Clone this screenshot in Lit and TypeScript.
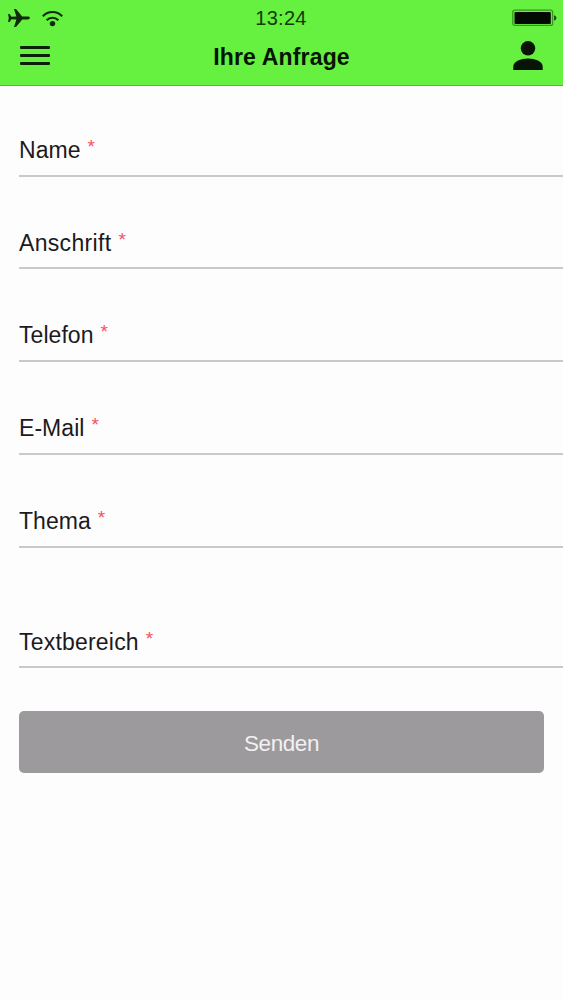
import { LitElement, html, css } from "lit";
import { customElement } from "lit/decorators.js";

const FIELDS = [
  { label: "Name", size: "first" },
  { label: "Anschrift", size: "second" },
  { label: "Telefon", size: "" },
  { label: "E-Mail", size: "" },
  { label: "Thema", size: "" },
  { label: "Textbereich", size: "area" },
];

@customElement("app-root")
export class AppRoot extends LitElement {
  static styles = css`
    :host {
      display: flex;
      flex-direction: column;
      height: 1000px;
      overflow: hidden;
      background: #fefdfe;
      color: #1c1a1c;
      font-family: "Liberation Sans", Arial, sans-serif;
    }
    * { box-sizing: border-box; }
    svg { display: block; }
    header {
      flex: none;
      height: 86px;
      background: #66f03f;
      border-bottom: 1px solid #58b63c;
      color: #071504;
    }
    .status, .nav {
      display: grid;
      grid-template-columns: 1fr auto 1fr;
    }
    .status { height: 36px; padding: 0 6px 0 7px; align-items: center; }
    .signals { display: flex; gap: 12px; align-items: center; }
    .time { font-size: 20px; line-height: 22px; letter-spacing: 0.3px; color: #123a0c; padding-bottom: 1px; margin-right: 2px; }
    .battery { justify-self: end; }
    .nav { height: 49px; padding: 0 20px; }
    .menu { display: flex; flex-direction: column; gap: 5px; padding-top: 10px; width: 30px; }
    .bar { height: 3px; border-radius: 1px; background: #092007; }
    h1 { margin: 0; padding-top: 7px; font-size: 23px; line-height: 28px; font-weight: 700; letter-spacing: 0.17px; }
    .user { justify-self: end; padding-top: 5px; }
    .field {
      margin-left: 19px;
      height: 93px;
      border-bottom: 2px solid #cac8ca;
      display: flex;
      align-items: flex-end;
      gap: 7px;
      padding-bottom: 12px;
      font-size: 23px;
      line-height: 26px;
      letter-spacing: 0.05px;
    }
    .first { height: 91px; }
    .second { height: 92px; padding-bottom: 11px; letter-spacing: 0.33px; }
    .area { height: 120px; padding-bottom: 11px; letter-spacing: 0.2px; }
    .star { color: #f4515b; font-size: 19px; padding-bottom: 3px; }
    .send {
      display: block;
      width: calc(100% - 38px);
      height: 62px;
      margin: 43px 19px 0;
      padding: 3px 0 0;
      border: 0;
      border-radius: 5px;
      background: #9d9a9d;
      color: #f2f0f2;
      font: 22.5px/26px "Liberation Sans", Arial, sans-serif;
      letter-spacing: -0.4px;
    }
  `;

  render() {
    return html`
      <header>
        <div class="status">
          <div class="signals">
            <svg width="23" height="20" viewBox="0 0 23 20" fill="#0d2b09">
              <path d="M22.800 10c0 1-.9 1.400-2 1.400h-5.600L9 19H7l2.400-7.600-5-.1L2.600 14H1.100l.7-4-.7-4h1.500l1.800 2.700 5-.1L7 1h2l6.200 7.600h5.600c1.100 0 2 .4 2 1.400z"/>
            </svg>
            <svg width="21" height="17" viewBox="0 0 21 17" fill="none" stroke="#0d2b09" stroke-width="2">
              <path d="M.8 6.200C6.300.6 14.700.6 20.200 6.200M4.600 10.200c3.400-3.300 8.400-3.300 11.800 0"/>
              <circle cx="10.500" cy="13.600" r="2.700" fill="#0d2b09" stroke="none"/>
            </svg>
          </div>
          <div class="time">13:24</div>
          <svg class="battery" width="45" height="18" viewBox="0 0 45 18">
            <rect x=".8" y="1.200" width="39.800" height="15.200" rx="2" fill="none" stroke="#38961f" stroke-width="1.300"/>
            <rect x="2.500" y="2.900" width="36.300" height="12" rx="1" fill="#030903"/>
            <path d="M42 6.200c3.200.7 3.200 4.700 0 5.400z" fill="#195011"/>
          </svg>
        </div>
        <div class="nav">
          <div class="menu"><div class="bar"></div><div class="bar"></div><div class="bar"></div></div>
          <h1>Ihre Anfrage</h1>
          <svg class="user" width="30" height="34" viewBox="0 0 30 29" fill="#081406">
            <circle cx="15" cy="7.300" r="7.200"/>
            <path d="M.3 29v-3.400C.3 20.300 8 17.500 15 17.500s14.700 2.800 14.700 8.100V29z"/>
          </svg>
        </div>
      </header>
      <main>
        ${FIELDS.map(
          (f) => html`<div class="field ${f.size}"><span>${f.label}</span><span class="star">*</span></div>`
        )}
        <button class="send" type="button">Senden</button>
      </main>
    `;
  }
}
